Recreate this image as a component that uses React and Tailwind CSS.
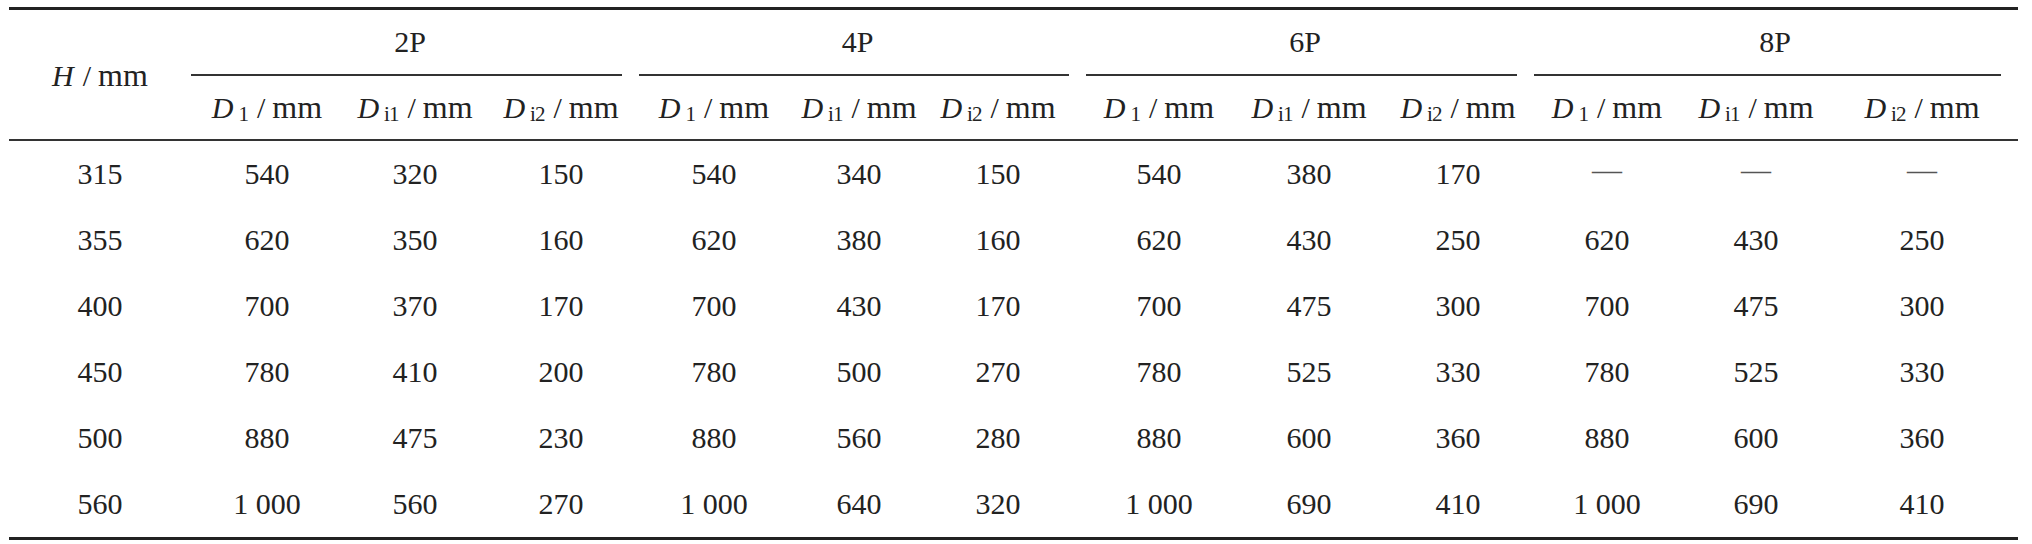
import React from "react";

const shifts = [
  "pl-[8px]",
  "pl-[10px]",
  "pl-[1px]",
  "pr-[3px]",
  "pl-[5px]",
  "pl-[4px]",
  "pr-[10px]",
  "pl-[6px]",
  "pl-[1px]",
  "pl-[1px]",
  "pl-[1px]",
  "pr-[8px]",
  "pr-[13px]",
];

const groups = [
  { label: "2P", line: "ml-[8px] mr-[15px]" },
  { label: "4P", line: "ml-[2px] mr-[9px]" },
  { label: "6P", line: "ml-[8px] mr-[15px]" },
  { label: "8P", line: "ml-[2px] mr-[17px]" },
];

const subs = ["1", "i1", "i2"];

const rows = [
  ["315", "540", "320", "150", "540", "340", "150", "540", "380", "170", "—", "—", "—"],
  ["355", "620", "350", "160", "620", "380", "160", "620", "430", "250", "620", "430", "250"],
  ["400", "700", "370", "170", "700", "430", "170", "700", "475", "300", "700", "475", "300"],
  ["450", "780", "410", "200", "780", "500", "270", "780", "525", "330", "780", "525", "330"],
  ["500", "880", "475", "230", "880", "560", "280", "880", "600", "360", "880", "600", "360"],
  ["560", "1 000", "560", "270", "1 000", "640", "320", "1 000", "690", "410", "1 000", "690", "410"],
];

function Unit({ sym, sub }) {
  return (
    <span className="inline-block whitespace-nowrap leading-none text-[30px]">
      <span className="italic text-[30px]">{sym}</span>
      {sub ? (
        <span className="text-[21px] ml-[5px] align-[-3px] tracking-[-1px]">{sub}</span>
      ) : null}
      <span className="text-[30px] ml-[9px]">/</span>
      <span className="text-[32px] ml-[7px]">mm</span>
    </span>
  );
}

export default function App() {
  return (
    <div className="w-[2032px] h-[544px] bg-white pt-[7px] font-['Liberation_Serif','Times_New_Roman',serif] text-[#222]">
      <div className="ml-[9px] w-[2009px] border-t-[3px] border-b-[3px] border-[#222]">
        <div className="grid grid-cols-[174px_158px_147px_149px_149px_142px_150px_156px_149px_149px_149px_158px_179px] border-b-2 border-[#333]">
          <div className="row-span-2 flex items-center justify-center pl-[8px]">
            <span className="inline-block whitespace-nowrap leading-none text-[30px]">
              <span className="italic text-[30px]">H</span>
              <span className="text-[30px] ml-[9px]">/</span>
              <span className="text-[32px] ml-[7px]">mm</span>
            </span>
          </div>
          {groups.map((g) => (
            <div key={g.label} className="col-span-3 flex flex-col">
              <div className="h-[64px] flex items-center justify-center text-[30px] leading-none">
                {g.label}
              </div>
              <div className={"h-[2px] bg-[#333] " + g.line} />
            </div>
          ))}
          {groups.map((g, gi) =>
            subs.map((s, si) => (
              <div
                key={g.label + s}
                className={"h-[63px] flex items-center justify-center " + shifts[1 + gi * 3 + si]}
              >
                <Unit sym="D" sub={s} />
              </div>
            ))
          )}
        </div>
        <div className="grid grid-cols-[174px_158px_147px_149px_149px_142px_150px_156px_149px_149px_149px_158px_179px]">
          {rows.map((r, ri) =>
            r.map((v, ci) => (
              <div
                key={ri + "-" + ci}
                className={
                  "h-[66px] flex items-center justify-center text-[30px] leading-none whitespace-nowrap " +
                  shifts[ci] +
                  (v === "—" ? " pb-[8px] text-[#555]" : "")
                }
              >
                {v}
              </div>
            ))
          )}
        </div>
      </div>
    </div>
  );
}
